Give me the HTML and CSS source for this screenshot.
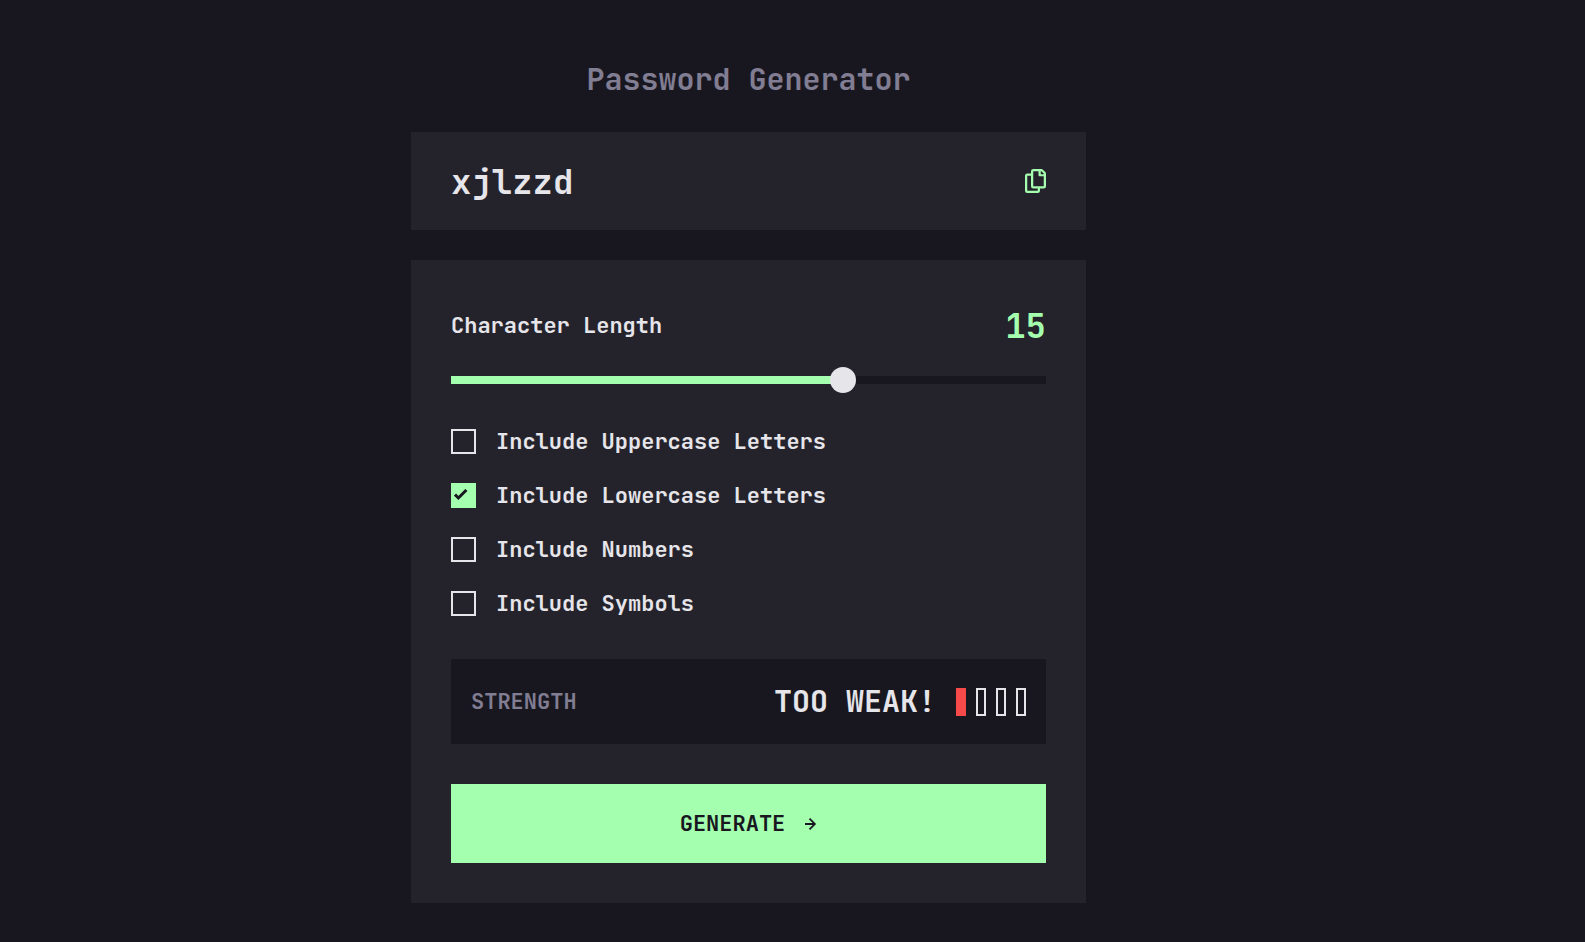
FILE: index.html
```html
<!DOCTYPE html>
<html lang="en">
<head>
<meta charset="utf-8">
<meta name="viewport" content="width=device-width, initial-scale=1">
<title>Password Generator</title>
<link rel="stylesheet" href="styles.css">
</head>
<body>
<main class="generator">
  <h1 class="title">Password Generator</h1>
  <div class="password">
    <input class="password-text" type="text" value="xjlzzd" aria-label="Generated password" readonly>
    <button class="copy" type="button" aria-label="Copy password">
      <svg width="21" height="24" viewBox="0 0 21 24" fill="currentColor" aria-hidden="true"><path d="M20.341 3.091 17.909.659A2.25 2.25 0 0 0 16.319 0H8.25A2.25 2.25 0 0 0 6 2.25V4.5H2.25A2.25 2.25 0 0 0 0 6.75v15A2.25 2.25 0 0 0 2.25 24h10.5A2.25 2.25 0 0 0 15 21.75V19.5h3.75A2.25 2.25 0 0 0 21 17.25V4.682a2.25 2.25 0 0 0-.659-1.591ZM12.469 21.75H2.53a.281.281 0 0 1-.281-.281V7.03a.281.281 0 0 1 .281-.281H6v10.5a2.25 2.25 0 0 0 2.25 2.25h4.5v1.969a.282.282 0 0 1-.281.281Zm6-4.5H8.53a.281.281 0 0 1-.281-.281V2.53a.281.281 0 0 1 .281-.281H13.5v3.938c0 .621.504 1.125 1.125 1.125h4.125v9.657a.282.282 0 0 1-.281.281Zm.281-12h-3V2.25h.451c.075 0 .147.03.2.082L18.667 4.6a.283.283 0 0 1 .082.199V5.25Z"/></svg>
    </button>
  </div>
  <form class="settings">
    <div class="length-row">
      <label for="length">Character Length</label>
      <output class="length-value" for="length">15</output>
    </div>
    <input class="slider" id="length" type="range" min="5" max="20" value="15" style="--fill: 66%">
    <div class="options">
      <div class="option"><input class="box" type="checkbox" id="upper"><label for="upper">Include Uppercase Letters</label></div>
      <div class="option"><input class="box" type="checkbox" id="lower" checked><label for="lower">Include Lowercase Letters</label><svg class="tick" width="14" height="12" viewBox="0 0 14 12" aria-hidden="true"><path d="M1 5.607 4.393 9l8-8" fill="none" stroke="currentColor" stroke-width="3"/></svg></div>
      <div class="option"><input class="box" type="checkbox" id="numbers"><label for="numbers">Include Numbers</label></div>
      <div class="option"><input class="box" type="checkbox" id="symbols"><label for="symbols">Include Symbols</label></div>
    </div>
    <div class="strength">
      <span class="strength-label">STRENGTH</span>
      <div class="rating">
        <span class="rating-text">TOO WEAK!</span>
        <div class="bars">
          <span class="bar bar-weak"></span>
          <span class="bar"></span>
          <span class="bar"></span>
          <span class="bar"></span>
        </div>
      </div>
    </div>
    <button class="generate" type="button">
      GENERATE
      <svg width="12" height="12" viewBox="0 0 12 12" fill="currentColor" aria-hidden="true"><path d="m5.106 12 6-6-6-6-1.265 1.265 3.841 3.84H.001v1.79h7.681l-3.841 3.84z"/></svg>
    </button>
  </form>
</main>
</body>
</html>
```
FILE: styles.css
```css
:root {
  --ink: #18171f;
  --panel: #24232c;
  --muted: #817d92;
  --light: #e6e5ea;
  --green: #a4ffaf;
  --red: #f64a4a;
}

* {
  box-sizing: border-box;
}

body {
  margin: 0;
  padding: 59px 88px 39px 0;
  background: var(--ink);
  color: var(--light);
  font: 600 22px/31px "JetBrains Mono", "DejaVu Sans Mono", monospace;
}

input,
button {
  margin: 0;
  padding: 0;
  border: 0;
  border-radius: 0;
  font: inherit;
}

button {
  cursor: pointer;
}

.generator {
  max-width: 675px;
  margin: 0 auto;
}

.title {
  margin: 0 0 33px;
  color: var(--muted);
  font-size: 30px;
  font-weight: 600;
  line-height: 40px;
  text-align: center;
}

.password {
  display: flex;
  align-items: center;
  gap: 20px;
  margin-bottom: 30px;
  padding: 26px 40px;
  background: var(--panel);
}

.password-text {
  flex: 1;
  min-width: 0;
  height: 46px;
  background: none;
  color: var(--light);
  font-size: 34px;
  outline: 0;
}

.copy {
  background: none;
  color: var(--green);
}

.copy svg {
  display: block;
}

.settings {
  padding: 40px;
  background: var(--panel);
}

.length-row {
  display: flex;
  align-items: center;
  justify-content: space-between;
  margin-bottom: 25px;
}

.length-value {
  color: var(--green);
  font-size: 34px;
  line-height: 51px;
}

.slider {
  display: block;
  width: 100%;
  height: 8px;
  appearance: none;
  background: linear-gradient(to right, var(--green) var(--fill), var(--ink) var(--fill));
}

.slider::-webkit-slider-thumb {
  width: 26px;
  height: 26px;
  appearance: none;
  border-radius: 50%;
  background: var(--light);
}

.options {
  display: grid;
  gap: 23px;
  margin: 42px 0 40px;
}

.option {
  position: relative;
  display: flex;
  align-items: center;
  gap: 20px;
}

.box {
  flex: none;
  width: 25px;
  height: 25px;
  appearance: none;
  border: 2px solid var(--light);
}

.box:checked {
  border-color: var(--green);
  background: var(--green);
}

.tick {
  position: absolute;
  top: 9px;
  left: 3px;
  color: var(--ink);
  pointer-events: none;
}

.strength {
  display: flex;
  align-items: center;
  justify-content: space-between;
  margin-bottom: 40px;
  padding: 20px;
  background: var(--ink);
}

.strength-label {
  color: var(--muted);
}

.rating {
  display: flex;
  align-items: center;
  gap: 20px;
}

.rating-text {
  font-size: 30px;
  line-height: 45px;
}

.bars {
  display: flex;
  gap: 10px;
}

.bar {
  width: 10px;
  height: 28px;
  border: 2px solid var(--light);
}

.bar-weak {
  border-color: var(--red);
  background: var(--red);
}

.generate {
  display: flex;
  align-items: center;
  justify-content: center;
  gap: 20px;
  width: 100%;
  padding: 24px;
  background: var(--green);
  color: var(--ink);
}
```
